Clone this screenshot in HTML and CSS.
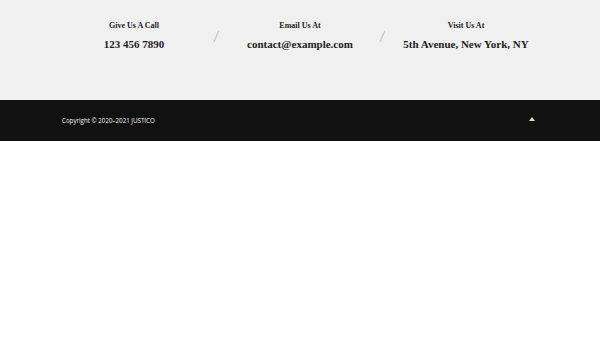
FILE: index.html
```html
<!DOCTYPE html>
<html lang="en">
<head>
  <meta charset="UTF-8">
  <meta name="viewport" content="width=device-width, initial-scale=1.0">
  <title>Justico Footer</title>
  <link rel="stylesheet" href="styles.css">
</head>
<body>
  <!-- Contact strip -->
  <section class="contact-bar">
    <div class="contact-row">
      <div class="contact-item">
        <h4>Give Us A Call</h4>
        <p>123 456 7890</p>
      </div>
      <span class="divider">/</span>
      <div class="contact-item">
        <h4>Email Us At</h4>
        <p>contact@example.com</p>
      </div>
      <span class="divider">/</span>
      <div class="contact-item">
        <h4>Visit Us At</h4>
        <p>5th Avenue, New York, NY</p>
      </div>
    </div>
  </section>

  <!-- Bottom bar -->
  <footer class="footer">
    <div class="footer-inner">
      <span class="copyright">Copyright &copy; 2020&ndash;2021 JUSTICO</span>
      <a class="to-top" href="#"></a>
    </div>
  </footer>
</body>
</html>
```

FILE: styles.css
```css
body {
  margin: 0;
  padding: 0;
  background: #fff;
  font-family: "Liberation Serif", serif;
}
.contact-bar {
  background: #f0f0f0;
  height: 100px;
}
.contact-row {
  width: 498px;
  margin: 0 auto;
  display: flex;
  align-items: flex-start;
  padding-top: 20px;
}
.contact-item {
  flex: 1;
  text-align: center;
  color: #1c1c1c;
}
.contact-item h4 {
  margin: 0;
  font-size: 8px;
  font-weight: bold;
  line-height: 12px;
}
.contact-item p {
  margin: 5px 0 0;
  font-size: 11px;
  font-weight: bold;
  line-height: 15px;
}
.divider {
  width: 0;
  position: relative;
  top: 8px;
  font-size: 14px;
  color: #aaa;
  font-family: "DejaVu Sans", sans-serif;
  font-weight: 200;
  transform: translateX(-3px) skewX(-8deg);
}
.footer {
  background: #111;
  height: 41px;
}
.footer-inner {
  width: 476px;
  margin: 0 auto;
  height: 41px;
  display: flex;
  align-items: center;
  justify-content: space-between;
}
.copyright {
  color: #f2f2f2;
  font-family: "Open Sans", sans-serif;
  font-size: 6.2px;
  margin-top: -1px;
}
.to-top {
  width: 0;
  height: 0;
  border-left: 3.5px solid transparent;
  border-right: 3.5px solid transparent;
  border-bottom: 4px solid #e8dcc2;
  margin-right: 3px;
  margin-top: -3px;
}
```
